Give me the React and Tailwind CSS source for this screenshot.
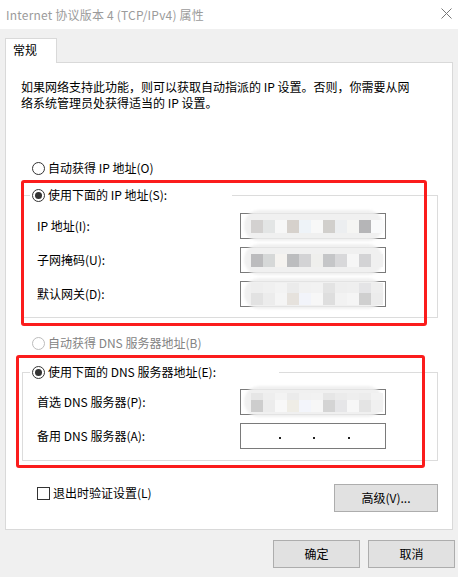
import React from "react";

function Radio({ checked, disabled, label }) {
  return (
    <div className="flex items-center h-[16px]">
      <span
        className={
          disabled
            ? "w-[13px] h-[13px] rounded-full border border-[#bcbcbc] bg-white flex items-center justify-center shrink-0"
            : "w-[13px] h-[13px] rounded-full border border-[#333333] bg-white flex items-center justify-center shrink-0"
        }
      >
        {checked && <span className="w-[7px] h-[7px] rounded-full bg-[#333333]" />}
      </span>
      <span className={disabled ? "ml-[3px] text-[#838383] whitespace-nowrap" : "ml-[3px] text-black whitespace-nowrap"}>
        {label}
      </span>
    </div>
  );
}

function MosaicInput({ rows }) {
  return (
    <div className="relative w-[146px] h-[26px] border border-[#7a7a7a] bg-white">
      <div className="absolute left-[3px] right-[2px] -top-[4px] -bottom-[3px] rounded-full bg-[#eeeeee]/90 blur-[1px]" />
      <div className="relative h-full pl-[10px] flex flex-col justify-center">
        {rows.map((row, i) => (
          <div key={i} className="flex">
            {row.map((c, j) => (
              <span key={j} className={"w-[12px] " + c} />
            ))}
          </div>
        ))}
      </div>
    </div>
  );
}

function DotInput() {
  return (
    <div className="w-[146px] h-[26px] border border-[#7a7a7a] bg-white flex items-center pl-[38px] pt-[4px]">
      <span className="w-[2px] h-[2px] bg-[#222222]" />
      <span className="ml-[32px] w-[2px] h-[2px] bg-[#222222]" />
      <span className="ml-[33px] w-[2px] h-[2px] bg-[#222222]" />
    </div>
  );
}

const in1 = [
  [
    "h-[13px] bg-[#d3d1d0]", "h-[13px] bg-[#e3e5e5]", "h-[13px] bg-[#f7f7f7]", "h-[13px] bg-[#d6d1cc]",
    "h-[13px] bg-[#eef3f8]", "h-[13px] bg-[#f8f8f8]", "h-[13px] bg-[#d1cfcc]", "h-[13px] bg-[#eceef0]",
    "h-[13px] bg-[#f5f5f3]", "h-[13px] bg-[#b5b5b7]", "h-[13px] bg-[#f9fafb]",
  ],
];
const in2 = [
  [
    "h-[13px] bg-[#bcbcbe]", "h-[13px] bg-[#d6d8d8]", "h-[13px] bg-[#f5f3f0]", "h-[13px] bg-[#bcbdbf]",
    "h-[13px] bg-[#d3d3d5]", "h-[13px] bg-[#efefed]", "h-[13px] bg-[#c5c6c8]", "h-[13px] bg-[#d8d8da]",
    "h-[13px] bg-[#f6f6f6]", "h-[13px] bg-[#d3d3d5]", "h-[13px] bg-[#f0f0f0]",
  ],
];
const in3 = [
  [
    "h-[10px] bg-[#eeeeee]", "h-[10px] bg-[#f0f0f0]", "h-[10px] bg-[#f3f3f3]", "h-[10px] bg-[#ebebeb]",
    "h-[10px] bg-[#f1f1f1]", "h-[10px] bg-[#f2f2f2]", "h-[10px] bg-[#e3e3e3]", "h-[10px] bg-[#eeeeee]",
    "h-[10px] bg-[#efefef]", "h-[10px] bg-[#e4e4e6]", "h-[10px] bg-[#eeeeee]",
  ],
  [
    "h-[12px] bg-[#e2e2e2]", "h-[12px] bg-[#ececec]", "h-[12px] bg-[#f5f5f5]", "h-[12px] bg-[#e6e2dd]",
    "h-[12px] bg-[#f2f4fa]", "h-[12px] bg-[#f7f7f7]", "h-[12px] bg-[#dedede]", "h-[12px] bg-[#f2f2f2]",
    "h-[12px] bg-[#f5f5f5]", "h-[12px] bg-[#cfcfcf]", "h-[12px] bg-[#ececec]",
  ],
];
const in4 = [
  [
    "h-[7px] bg-[#e6e6e6]", "h-[7px] bg-[#eeeeee]", "h-[7px] bg-[#f3f3f3]", "h-[7px] bg-[#ebebeb]",
    "h-[7px] bg-[#f1f1f1]", "h-[7px] bg-[#f2f2f2]", "h-[7px] bg-[#e6e6e6]", "h-[7px] bg-[#ebebeb]",
    "h-[7px] bg-[#eeeeee]", "h-[7px] bg-[#ececec]", "h-[7px] bg-[#f2f2f2]",
  ],
  [
    "h-[12px] bg-[#cdcdcd]", "h-[12px] bg-[#ececec]", "h-[12px] bg-[#f8f8f8]", "h-[12px] bg-[#efede6]",
    "h-[12px] bg-[#f3f5fb]", "h-[12px] bg-[#f7f7f7]", "h-[12px] bg-[#d4d4d4]", "h-[12px] bg-[#e6e6e8]",
    "h-[12px] bg-[#f7f7f7]", "h-[12px] bg-[#e4e4e4]", "h-[12px] bg-[#f0f0f0]",
  ],
];

function Row({ label, children }) {
  return (
    <div className="flex items-center">
      <span className="w-[203px] whitespace-nowrap">{label}</span>
      {children}
    </div>
  );
}

export default function App() {
  return (
    <div className="relative w-[458px] h-[577px] overflow-hidden bg-[#f0f0f0] text-[12px] leading-[16px] text-black font-['Noto_Sans_CJK_SC','Noto_Sans',sans-serif]">
      {/* Title bar */}
      <div className="h-[29px] bg-white flex items-center justify-between pl-[6px] pr-[6px]">
        <span className="text-[#9b9b9b] text-[12px] tracking-[0.2px] whitespace-nowrap">Internet 协议版本 4 (TCP/IPv4) 属性</span>
        <svg width="11" height="11" viewBox="0 0 11 11" className="mt-[-2px]">
          <path d="M0.5 0.5 L10.5 10.5 M10.5 0.5 L0.5 10.5" stroke="#777777" strokeWidth="1" fill="none" />
        </svg>
      </div>

      {/* Tab + panel */}
      <div className="pt-[9px] px-[5px]">
        <div className="relative z-10 -mb-px w-[52px] h-[25px] bg-white border border-b-0 border-[#d9d9d9] pl-[7px] pt-[3px]">
          常规
        </div>
        <div className="h-[468px] bg-white border border-[#d9d9d9] flex flex-col">
          <p className="mt-[16px] ml-[15px] leading-[16px] whitespace-nowrap">
            如果网络支持此功能，则可以获取自动指派的 IP 设置。否则，你需要从网
            <br />
            络系统管理员处获得适当的 IP 设置。
          </p>

          <div className="mt-[49px] ml-[26px]">
            <Radio label="自动获得 IP 地址(O)" />
          </div>

          <fieldset className="mt-[11px] ml-[16px] w-[416px] border border-[#dcdcdc] p-0">
            <legend className="ml-[7px] w-[202px] h-[16px] pl-[2px]">
              <Radio checked label="使用下面的 IP 地址(S):" />
            </legend>
            <div className="pt-[10px] pb-[10px] pl-[14px] flex flex-col gap-[8px]">
              <Row label="IP 地址(I):">
                <MosaicInput rows={in1} />
              </Row>
              <Row label="子网掩码(U):">
                <MosaicInput rows={in2} />
              </Row>
              <Row label="默认网关(D):">
                <MosaicInput rows={in3} />
              </Row>
            </div>
          </fieldset>

          <div className="mt-[17px] ml-[26px]">
            <Radio disabled label="自动获得 DNS 服务器地址(B)" />
          </div>

          <fieldset className="mt-[13px] ml-[16px] w-[416px] border border-[#dcdcdc] p-0">
            <legend className="ml-[7px] w-[249px] h-[16px] pl-[2px]">
              <Radio checked label="使用下面的 DNS 服务器地址(E):" />
            </legend>
            <div className="pt-[9px] pb-[11px] pl-[14px] flex flex-col gap-[8px]">
              <Row label="首选 DNS 服务器(P):">
                <MosaicInput rows={in4} />
              </Row>
              <Row label="备用 DNS 服务器(A):">
                <DotInput />
              </Row>
            </div>
          </fieldset>

          <div className="mt-[23px] ml-[31px] mr-[14px] flex items-start justify-between">
            <div className="mt-[1px] h-[16px] flex items-center">
              <span className="w-[13px] h-[13px] border border-[#333333] bg-white" />
              <span className="ml-[3px] whitespace-nowrap">退出时验证设置(L)</span>
            </div>
            <button className="w-[104px] h-[28px] bg-[#e1e1e1] border border-[#adadad] flex items-center justify-center">
              高级(V)...
            </button>
          </div>
        </div>
      </div>

      {/* Bottom buttons */}
      <div className="mt-[10px] pr-[3px] flex justify-end gap-[8px]">
        <button className="w-[87px] h-[28px] bg-[#e1e1e1] border border-[#adadad] flex items-center justify-center">
          确定
        </button>
        <button className="w-[87px] h-[28px] bg-[#e1e1e1] border border-[#adadad] flex items-center justify-center">
          取消
        </button>
      </div>

      {/* Red annotation boxes */}
      <div className="absolute left-[21px] top-[180px] w-[406px] h-[146px] border-[3px] border-[#fb1c1c] rounded-[3px] pointer-events-none" />
      <div className="absolute left-[16px] top-[355px] w-[409px] h-[113px] border-[3px] border-[#fb1c1c] rounded-[3px] pointer-events-none" />
    </div>
  );
}
